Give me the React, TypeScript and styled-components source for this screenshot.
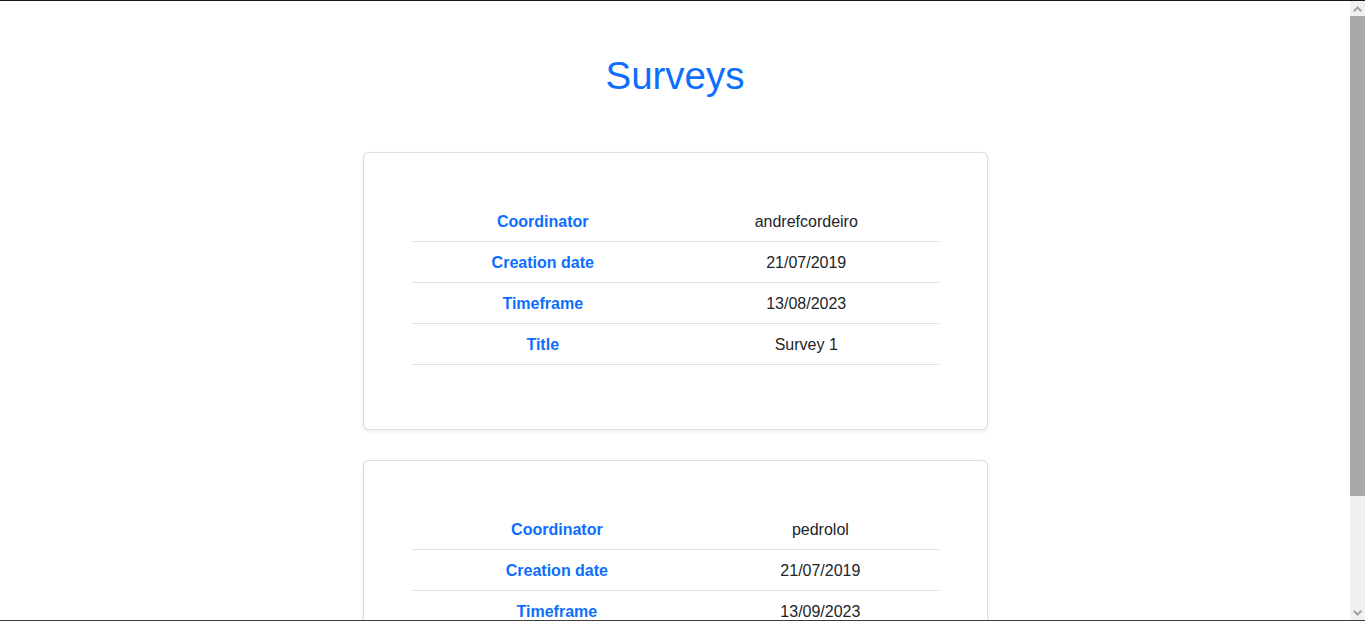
import React from "react";
import styled, { createGlobalStyle } from "styled-components";

const GlobalStyle = createGlobalStyle`
  html, body {
    margin: 0;
    padding: 0;
    overflow: hidden;
    background: #ffffff;
  }
  body {
    font-family: "Liberation Sans", Arial, sans-serif;
    color: #212529;
  }
  * { box-sizing: border-box; }
`;

const Frame = styled.div`
  height: 100vh;
  display: flex;
  border-top: 1px solid #16161d;
  border-bottom: 1px solid #3c3c3c;
`;

const Viewport = styled.main`
  flex: 1;
  overflow: hidden;
  display: flex;
  flex-direction: column;
  align-items: center;
  padding-top: 52px;
`;

const Title = styled.h1`
  margin: 0 0 53px;
  font-size: 38.5px;
  line-height: 1.2;
  font-weight: 500;
  color: #0d6efd;
  text-align: center;
`;

const CardList = styled.div`
  width: 625px;
  display: flex;
  flex-direction: column;
  gap: 30px;
  padding-bottom: 24px;
`;

const Card = styled.section`
  border: 1px solid rgba(0, 0, 0, 0.13);
  border-radius: 6px;
  background: #fff;
  box-shadow: 0 2px 4px rgba(0, 0, 0, 0.075);
  padding: 48px 48px 48px;
`;

const Table = styled.table`
  width: 100%;
  border-collapse: collapse;
  margin-bottom: 16px;
  font-size: 16px;
  line-height: 24px;
`;

const Row = styled.tr`
  border-bottom: 1px solid #dee2e6;
`;

const Label = styled.th`
  padding: 9px 8px 7px;
  text-align: center;
  font-weight: 700;
  color: #0d6efd;
`;

const Value = styled.td`
  padding: 9px 8px 7px;
  text-align: center;
  color: #212529;
`;

const Scrollbar = styled.div`
  width: 15px;
  background: #f0f0f0;
  display: flex;
  flex-direction: column;
`;

const ArrowButton = styled.div`
  height: 15px;
  display: flex;
  align-items: center;
  justify-content: center;
  color: #a3a3a3;
`;

const Track = styled.div`
  flex: 1;
  display: flex;
  flex-direction: column;
`;

const Thumb = styled.div`
  height: 480px;
  background: #a8a8a8;
`;

type Survey = {
  coordinator: string;
  created: string;
  timeframe: string;
  title: string;
};

const surveys: Survey[] = [
  { coordinator: "andrefcordeiro", created: "21/07/2019", timeframe: "13/08/2023", title: "Survey 1" },
  { coordinator: "pedrolol", created: "21/07/2019", timeframe: "13/09/2023", title: "Survey 2" },
];

const Chevron = ({ up }: { up?: boolean }) => (
  <svg width="9" height="6" viewBox="0 0 9 6" fill="currentColor">
    {up ? (
      <path d="M4.5 0 L9 4.5 L7.5 6 L4.5 3 L1.5 6 L0 4.5 Z" />
    ) : (
      <path d="M4.5 6 L9 1.5 L7.5 0 L4.5 3 L1.5 0 L0 1.5 Z" />
    )}
  </svg>
);

export default function App() {
  return (
    <>
      <GlobalStyle />
      <Frame>
        <Viewport>
          <Title>Surveys</Title>
          <CardList>
            {surveys.map((s) => (
              <Card key={s.title}>
                <Table>
                  <tbody>
                    <Row>
                      <Label>Coordinator</Label>
                      <Value>{s.coordinator}</Value>
                    </Row>
                    <Row>
                      <Label>Creation date</Label>
                      <Value>{s.created}</Value>
                    </Row>
                    <Row>
                      <Label>Timeframe</Label>
                      <Value>{s.timeframe}</Value>
                    </Row>
                    <Row>
                      <Label>Title</Label>
                      <Value>{s.title}</Value>
                    </Row>
                  </tbody>
                </Table>
              </Card>
            ))}
          </CardList>
        </Viewport>
        <Scrollbar>
          <ArrowButton>
            <Chevron up />
          </ArrowButton>
          <Track>
            <Thumb />
          </Track>
          <ArrowButton>
            <Chevron />
          </ArrowButton>
        </Scrollbar>
      </Frame>
    </>
  );
}
